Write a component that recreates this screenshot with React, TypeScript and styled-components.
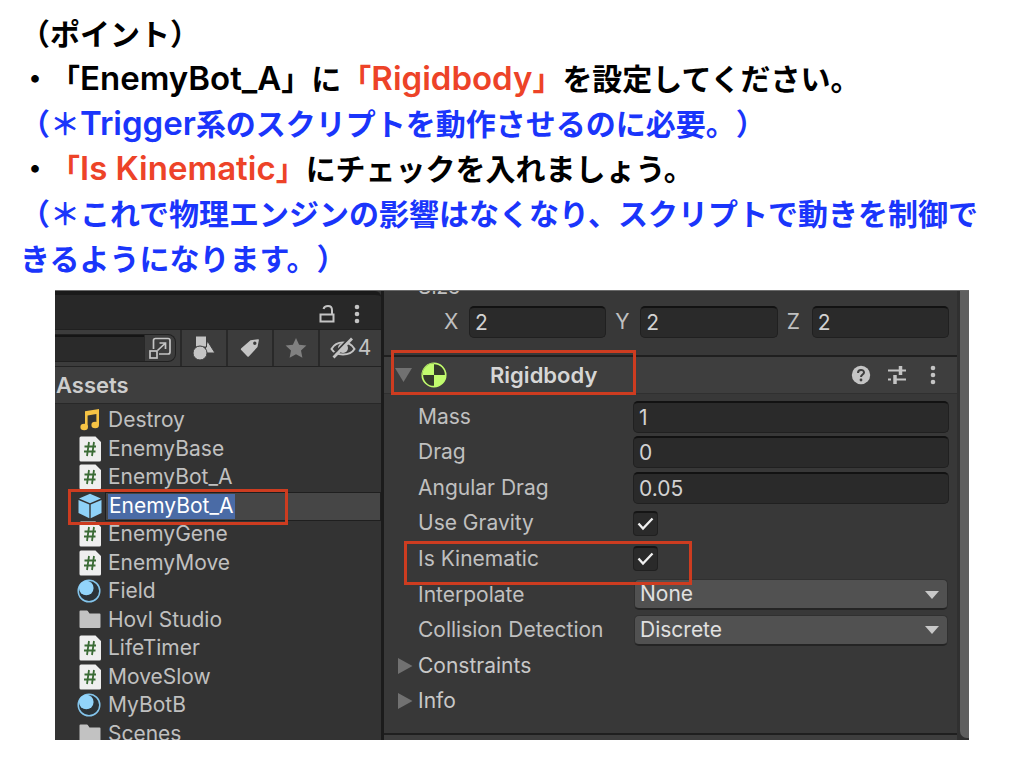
import React from "react";
import styled, { createGlobalStyle, css } from "styled-components";

const GlobalStyle = createGlobalStyle`
  *, *::before, *::after { box-sizing: border-box; }
  body {
    margin: 0;
    background: #fff;
    color: #000;
    font-family: Inter, "Noto Sans CJK JP", sans-serif;
  }
  input, button, select { font: inherit; color: inherit; }
`;

const Page = styled.main`
  padding: 12px 40px 24px 20px;
`;

const Notes = styled.section`
  font-size: 30px;
  font-weight: 600;
  line-height: 45px;
  text-spacing-trim: space-all;
  word-break: break-all;
  line-break: anywhere;
`;

const Line = styled.p<{ $note?: boolean }>`
  margin: 0;
  margin-right: -16px;
  color: ${(p) => (p.$note ? "#1a35fb" : "#000")};
`;

const Key = styled.strong`
  font-weight: inherit;
  color: #ed4328;
`;

const Latin = styled.span`
  font-size: 33px;
  line-height: 1;
`;

const Editor = styled.figure`
  display: grid;
  grid-template-columns: 326px minmax(0, 1fr) 12px;
  height: 450px;
  margin: 8px 15px 0 35px;
  overflow: hidden;
  background: #383838;
  border-top: 1px solid #6a6a6a;
  color: #c0c0c0;
  font-size: 21px;
  line-height: 28px;
`;

const Project = styled.section`
  display: flex;
  flex-direction: column;
  min-height: 0;
  background: #333;
  > * { flex: none; }
`;

const TabBar = styled.header`
  display: flex;
  justify-content: flex-end;
  align-items: center;
  gap: 13px;
  height: 39px;
  padding: 4px 20px 0 0;
  background: #282828;
  border-top: 4px solid #1a1a1a;
  border-bottom: 1px solid #202020;
  border-top-right-radius: 6px;
`;

const IconButton = styled.button`
  display: flex;
  align-items: center;
  justify-content: center;
  gap: 2px;
  padding: 0;
  border: 0;
  background: none;
  color: #c4c4c4;
  svg { display: block; }
`;

const Tools = styled.div`
  display: grid;
  grid-template-columns: 125px 46px 46px 46px minmax(0, 1fr);
  height: 37px;
  background: #3c3c3c;
  border-bottom: 1px solid #232323;
  ${IconButton} { border-left: 2px solid #292929; }
`;

const Search = styled.div`
  display: flex;
  margin: 4px 4px 4px 0;
  border: 1px solid #202020;
  border-left: 0;
  border-radius: 0 8px 8px 0;
  overflow: hidden;
  input {
    width: 89px;
    border: 0;
    border-top: 2px solid #151515;
    background: #2a2a2a;
  }
  ${IconButton} {
    flex: 1;
    border-left: 1px solid #282828;
  }
`;

const Folder = styled.h2`
  margin: 0;
  padding: 4px 0 3px 1px;
  height: 37px;
  background: #3e3e3e;
  border-bottom: 1px solid #282828;
  font-size: 22px;
  font-weight: 600;
  line-height: 28px;
  color: #cdcdcd;
`;

const Assets = styled.ul`
  display: grid;
  grid-template-rows: repeat(12, minmax(0, 1fr));
  height: 344px;
  margin: 0;
  padding: 2px 0 0;
  list-style: none;
`;

const Asset = styled.li`
  position: relative;
  display: grid;
  grid-template-columns: 50px minmax(0, 1fr);
  align-items: center;
  svg { display: block; justify-self: end; margin-right: 4px; }
  > span { padding-left: 3px; }
`;

const Rename = styled.div`
  display: flex;
  align-items: center;
  height: 29px;
  padding: 0 2px;
  border: 1px solid #1f1f1f;
  background: #464646;
  input {
    field-sizing: content;
    height: 25px;
    padding: 0 1px;
    border: 0;
    background: #4a6ba6;
    color: #fff;
  }
`;

const frame = css`
  content: "";
  position: absolute;
  border: 3px solid #cd3c20;
  pointer-events: none;
  z-index: 1;
`;

const MarkedAsset = styled(Asset)`
  svg { margin-right: 3px; }
  &::after { ${frame} inset: -3px 93px -5px 13px; }
`;

const Inspector = styled.section`
  display: flex;
  flex-direction: column;
  min-width: 0;
  min-height: 0;
  border-left: 3px solid #1b1b1b;
  > * { flex: none; }
`;

const SizeLabel = styled.div`
  height: 7px;
  margin-bottom: 8px;
  padding-left: 34px;
  display: flex;
  align-items: flex-end;
  line-height: 22px;
`;

const Vector = styled.div`
  display: grid;
  grid-template-columns: repeat(3, 1fr);
  column-gap: 9px;
  height: 49px;
  padding: 0 8px 0 60px;
  align-items: start;
`;

const Axis = styled.label`
  display: grid;
  grid-template-columns: 25px minmax(0, 1fr);
  align-items: center;
`;

const TextField = styled.input`
  width: 100%;
  height: 32px;
  padding: 0 5px;
  border: 1px solid #202020;
  border-top: 2px solid #121212;
  border-radius: 5px;
  background: #2a2a2a;
  color: #d2d2d2;
`;

const ComponentBar = styled.header`
  position: relative;
  display: flex;
  align-items: center;
  gap: 9px;
  height: 39px;
  padding: 0 14px 0 11px;
  background: #3e3e3e;
  border-top: 2px solid #1f1f1f;
  border-bottom: 1px solid #303030;
  &::after { ${frame} inset: -7px auto -2px 7px; width: 245px; }
`;

const ComponentName = styled.h2`
  flex: 1;
  margin: 0 0 0 34px;
  font-size: 22px;
  font-weight: 600;
  line-height: 28px;
  color: #d6d6d6;
`;

const Actions = styled.div`
  display: flex;
  gap: 16px;
  ${IconButton} { width: 20px; }
`;

const Properties = styled.div`
  display: grid;
  grid-template-rows: repeat(9, minmax(0, 1fr));
  height: 320px;
  margin-top: 5px;
`;

const Row = styled.div<{ $marked?: boolean }>`
  position: relative;
  display: grid;
  grid-template-columns: 34px 215px minmax(0, 1fr);
  align-items: center;
  padding-right: 8px;
  > svg { display: block; margin-left: 14px; }
  ${(p) => p.$marked && css`&::after { ${frame} inset: 0 auto -8px 20px; width: 288px; }`}
`;

const Check = styled.input`
  appearance: none;
  width: 25px;
  height: 25px;
  margin: 0;
  border: 1px solid #202020;
  border-top: 2px solid #151515;
  border-radius: 4px;
  background: #2a2a2a;
`;

const CheckCell = styled.span`
  display: grid;
  justify-items: start;
  > * { grid-area: 1 / 1; }
  > svg { pointer-events: none; }
`;

const SelectCell = styled.span`
  display: grid;
  align-items: center;
  padding: 0 1px;
  > * { grid-area: 1 / 1; }
  > svg { justify-self: end; margin-right: 9px; pointer-events: none; }
`;

const Select = styled.select`
  appearance: none;
  width: 100%;
  height: 31px;
  padding: 0 5px;
  border: 1px solid #303030;
  border-bottom: 2px solid #242424;
  border-radius: 5px;
  background: #515151;
  color: #e0e0e0;
`;

const Foldout = styled.button`
  padding: 0;
  border: 0;
  background: none;
  color: #c8c8c8;
  text-align: left;
`;

const NextBar = styled.div`
  height: 12px;
  margin-top: 14px;
  border-top: 2px solid #1f1f1f;
  background: #3e3e3e;
`;

const ScrollTrack = styled.div`
  padding: 0 0 2px 3px;
  background: #303030;
`;

const ScrollThumb = styled.div`
  height: 100%;
  border-bottom-left-radius: 7px;
  background: #5f5f5f;
`;

const Dots = () => (
  <svg width="8" height="20" viewBox="0 0 8 20" fill="currentColor">
    <circle cx="4" cy="3" r="2.3" /><circle cx="4" cy="10" r="2.3" /><circle cx="4" cy="17" r="2.3" />
  </svg>
);

const Lock = () => (
  <svg width="26" height="20" viewBox="0 0 26 20" fill="none" stroke="currentColor" strokeWidth="2">
    <rect x="6.5" y="10.5" width="13" height="7" />
    <path d="M18 10V6.200C18 3.600 16.500 2 14 2S10 3.200 9.500 5" />
  </svg>
);

const Expand = () => (
  <svg width="24" height="24" viewBox="0 0 24 24" fill="none" stroke="currentColor" strokeWidth="1.700">
    <path d="M5.500 13V4.500a2 2 0 0 1 2-2H20a2 2 0 0 1 2 2V16a2 2 0 0 1-2 2h-9" />
    <rect x="2" y="15" width="7" height="7" />
    <path d="M9.500 14.500 17 7.500M11.500 7H17.500V13" />
  </svg>
);

const Shapes = () => (
  <svg width="24" height="26" viewBox="0 0 24 26" fill="currentColor" stroke="#3c3c3c" strokeWidth="1">
    <path d="M15.500 6 23 18H12z" /><path d="M3.500 1h11v11h-11z" /><circle cx="8" cy="18" r="7" />
  </svg>
);

const Tag = () => (
  <svg width="20" height="20" viewBox="0 0 20 20" fill="currentColor">
    <path fillRule="evenodd" d="M1.300 10.300 10.500 2.300 18 1.200a.8.8 0 0 1 .9.9L17.500 9 9 18.300a1.200 1.200 0 0 1-1.800 0l-6-6.300a1.200 1.200 0 0 1 .1-1.700zM14.800 7a1.700 1.700 0 1 0 0-3.400 1.700 1.700 0 0 0 0 3.400z" />
  </svg>
);

const Star = () => (
  <svg width="22" height="22" viewBox="0 0 22 22" fill="#808080">
    <path d="m11 1 3.100 6.700 7.300.9-5.400 5 1.400 7.200-6.400-3.600-6.400 3.600L6 13.600l-5.400-5 7.300-.9z" />
  </svg>
);

const Hidden = () => (
  <svg width="26" height="22" viewBox="0 0 26 22" fill="none" stroke="currentColor" strokeWidth="2">
    <path d="M1.500 12C4 7.500 8 5.500 13 5.500S22 7.500 24.500 12C22 16 18 17.500 13 17.500S4 16 1.500 12z" />
    <circle cx="13" cy="11" r="5" fill="currentColor" stroke="none" />
    <path d="M19.500 1 1.500 19.500" stroke="#3c3c3c" strokeWidth="2" />
    <path d="M22 1.500 3.500 20.500" strokeWidth="2.800" />
  </svg>
);

const Music = () => (
  <svg width="22" height="24" viewBox="0 0 22 24" fill="#f6c344">
    <path d="M6 3.200 20 1v16h-2.600V6L8.600 7.500V19H6z" />
    <ellipse cx="5.200" cy="19" rx="3.800" ry="3.200" /><ellipse cx="16.200" cy="17" rx="3.800" ry="3.200" />
  </svg>
);

const Script = () => (
  <svg width="22" height="26" viewBox="0 0 22 26">
    <path d="M2 .5h14.500L22 6v18a1.500 1.500 0 0 1-1.500 1.500H2A1.500 1.500 0 0 1 .5 24V2A1.500 1.500 0 0 1 2 .5z" fill="#efefef" />
    <path d="M10 6 8 20M15 6l-2 14M5.500 10.500H17M5 15.500h11.500" stroke="#3a6b35" strokeWidth="1.800" fill="none" />
  </svg>
);

const Cube = () => (
  <svg width="24" height="26" viewBox="0 0 24 26" fill="#8fd2f8">
    <path d="M12 .8 23 5.500 12 10.300 1 5.500z" /><path d="M.5 7 11.300 11.600V25.300L.5 20z" /><path d="M23.500 7 12.700 11.600V25.300L23.500 20z" />
  </svg>
);

const Sphere = () => (
  <svg width="24" height="24" viewBox="0 0 24 24">
    <circle cx="12" cy="12" r="10.800" fill="#2b3338" stroke="#84c5ec" strokeWidth="1.500" />
    <circle cx="9.300" cy="9" r="7.300" fill="#92d4fa" />
  </svg>
);

const Directory = () => (
  <svg width="22" height="19" viewBox="0 0 22 19" fill="#c2c2c2">
    <path d="M1.500.5H8a1 1 0 0 1 .8.4L10.500 3.500h10a1 1 0 0 1 1 1V17a1 1 0 0 1-1 1h-19a1 1 0 0 1-1-1V1.500a1 1 0 0 1 1-1z" />
  </svg>
);

const Body = () => (
  <svg width="26" height="26" viewBox="0 0 26 26">
    <circle cx="13" cy="13" r="11.700" fill="#343a2b" stroke="#c1fb6e" strokeWidth="1.700" />
    <path d="M13 13V1.300A11.700 11.700 0 0 0 1.300 13z" fill="#343a2b" />
    <path d="M13 13V1.300A11.700 11.700 0 0 0 1.300 13zM13 13v11.700A11.700 11.700 0 0 0 24.700 13z" fill="#c1fb6e" />
  </svg>
);

const Help = () => (
  <svg width="20" height="20" viewBox="0 0 20 20">
    <circle cx="10" cy="10" r="9.200" fill="currentColor" />
    <path d="M7 8c0-4 6-4 6-.5C13 9.500 10 9.500 10 12" fill="none" stroke="#3e3e3e" strokeWidth="2" />
    <circle cx="10" cy="15" r="1.400" fill="#3e3e3e" />
  </svg>
);

const Preset = () => (
  <svg width="20" height="20" viewBox="0 0 20 20" fill="none" stroke="currentColor">
    <path d="M1 5.500h11M15 5.500h4M1 14.500h3M8 14.500h11" strokeWidth="2" />
    <path d="M13.500 1v9M8 10v9" strokeWidth="3.500" />
  </svg>
);

const Down = ({ large = false }) => (
  <svg width={large ? 17 : 14} height={large ? 14 : 8} viewBox="0 0 14 8" preserveAspectRatio="none" fill={large ? "#717171" : "#c8c8c8"}>
    <path d="M0 0h14L7 8z" />
  </svg>
);

const Right = () => (
  <svg width="15" height="16" viewBox="0 0 15 16" fill="#717171"><path d="M0 0v16l14.500-8z" /></svg>
);

const Tick = () => (
  <svg width="25" height="25" viewBox="0 0 25 25" fill="none" stroke="#f0f0f0" strokeWidth="2.300">
    <path d="m5.500 12.500 4.500 5L19.500 7.500" />
  </svg>
);

const assetIcons = { music: Music, script: Script, sphere: Sphere, dir: Directory };
type AssetKind = keyof typeof assetIcons;

const AssetRow = ({ kind, name }: { kind: AssetKind; name: string }) => {
  const Icon = assetIcons[kind];
  return <Asset><Icon /><span>{name}</span></Asset>;
};

const NumberRow = ({ id, label, value }: { id: string; label: string; value: string }) => (
  <Row><i /><label htmlFor={id}>{label}</label><TextField id={id} defaultValue={value} /></Row>
);

const CheckRow = ({ id, label, marked }: { id: string; label: string; marked?: boolean }) => (
  <Row $marked={marked}>
    <i /><label htmlFor={id}>{label}</label>
    <CheckCell><Check id={id} type="checkbox" defaultChecked /><Tick /></CheckCell>
  </Row>
);

const SelectRow = ({ id, label, value }: { id: string; label: string; value: string }) => (
  <Row>
    <i /><label htmlFor={id}>{label}</label>
    <SelectCell><Select id={id}><option>{value}</option></Select><Down /></SelectCell>
  </Row>
);

export default function App() {
  return (
    <Page>
      <GlobalStyle />
      <Notes>
        <Line>（ポイント）</Line>
        <Line>・「<Latin>EnemyBot_A</Latin>」に<Key>「<Latin>Rigidbody</Latin>」</Key>を設定してください。</Line>
        <Line $note>（＊<Latin>Trigger</Latin>系のスクリプトを動作させるのに必要。）</Line>
        <Line>・<Key>「<Latin>Is Kinematic</Latin>」</Key>にチェックを入れましょう。</Line>
        <Line $note>（＊これで物理エンジンの影響はなくなり、スクリプトで動きを制御できるようになります。）</Line>
      </Notes>
      <Editor>
        <Project>
          <TabBar>
            <IconButton aria-label="Lock"><Lock /></IconButton>
            <IconButton aria-label="Menu"><Dots /></IconButton>
          </TabBar>
          <Tools>
            <Search>
              <input aria-label="Search" />
              <IconButton aria-label="Open search"><Expand /></IconButton>
            </Search>
            <IconButton aria-label="Search by type"><Shapes /></IconButton>
            <IconButton aria-label="Search by label"><Tag /></IconButton>
            <IconButton aria-label="Favorites"><Star /></IconButton>
            <IconButton aria-label="Hidden packages"><Hidden />4</IconButton>
          </Tools>
          <Folder>Assets</Folder>
          <Assets>
            <AssetRow kind="music" name="Destroy" />
            <AssetRow kind="script" name="EnemyBase" />
            <AssetRow kind="script" name="EnemyBot_A" />
            <MarkedAsset>
              <Cube />
              <Rename><input aria-label="Asset name" defaultValue="EnemyBot_A" /></Rename>
            </MarkedAsset>
            <AssetRow kind="script" name="EnemyGene" />
            <AssetRow kind="script" name="EnemyMove" />
            <AssetRow kind="sphere" name="Field" />
            <AssetRow kind="dir" name="Hovl Studio" />
            <AssetRow kind="script" name="LifeTimer" />
            <AssetRow kind="script" name="MoveSlow" />
            <AssetRow kind="sphere" name="MyBotB" />
            <AssetRow kind="dir" name="Scenes" />
          </Assets>
        </Project>
        <Inspector>
          <SizeLabel>Size</SizeLabel>
          <Vector>
            {["X", "Y", "Z"].map((axis) => (
              <Axis key={axis}>{axis}<TextField defaultValue="2" /></Axis>
            ))}
          </Vector>
          <ComponentBar>
            <Down large />
            <Body />
            <ComponentName>Rigidbody</ComponentName>
            <Actions>
              <IconButton aria-label="Help"><Help /></IconButton>
              <IconButton aria-label="Presets"><Preset /></IconButton>
              <IconButton aria-label="More"><Dots /></IconButton>
            </Actions>
          </ComponentBar>
          <Properties>
            <NumberRow id="mass" label="Mass" value="1" />
            <NumberRow id="drag" label="Drag" value="0" />
            <NumberRow id="angular" label="Angular Drag" value="0.05" />
            <CheckRow id="gravity" label="Use Gravity" />
            <CheckRow id="kinematic" label="Is Kinematic" marked />
            <SelectRow id="interpolate" label="Interpolate" value="None" />
            <SelectRow id="collision" label="Collision Detection" value="Discrete" />
            <Row><Right /><Foldout>Constraints</Foldout></Row>
            <Row><Right /><Foldout>Info</Foldout></Row>
          </Properties>
          <NextBar />
        </Inspector>
        <ScrollTrack><ScrollThumb /></ScrollTrack>
      </Editor>
    </Page>
  );
}
